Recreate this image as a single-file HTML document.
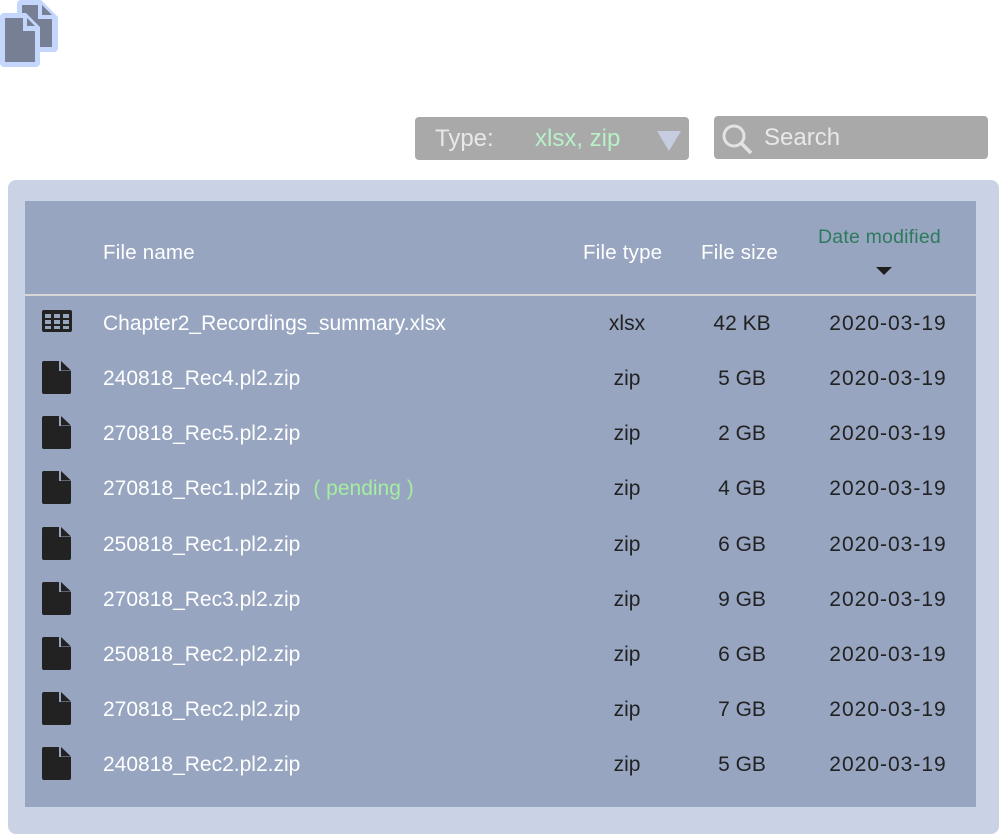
<!DOCTYPE html>
<html><head><meta charset="utf-8"><style>
*{margin:0;padding:0;box-sizing:border-box}
body{width:1005px;height:835px;background:#fff;position:relative;overflow:hidden;font-family:"Liberation Sans",sans-serif}
.a{position:absolute;white-space:nowrap}
.outer{left:8px;top:180px;width:991px;height:654px;background:#cad3e6;border-radius:8px}
.inner{left:25px;top:201px;width:951px;height:606px;background:#97a5c0}
.hd{color:#fff;font-size:20.5px;letter-spacing:0.2px}
.nm{color:#fff;font-size:21px;left:103px}
.c{color:#222;font-size:21px;text-align:center}
.dt{letter-spacing:1px}
</style></head><body>
<svg class="a" style="left:0;top:0" width="60" height="70" viewBox="0 0 60 70">
<path d="M21 0h20l17 17v31a4 4 0 0 1-4 4H21a4 4 0 0 1-4-4V4a4 4 0 0 1 4-4z" fill="#c4d6fb"/>
<path d="M22 5h16v14h14v28H22z" fill="#767f93"/><path d="M42 5l10 10H42z" fill="#767f93"/>
<path d="M4 13h22l14 14v36a4 4 0 0 1-4 4H4a4 4 0 0 1-4-4V17a4 4 0 0 1 4-4z" fill="#c4d6fb"/>
<path d="M5 18h18v13h12v31H5z" fill="#767f93"/><path d="M27 18l8 8h-8z" fill="#767f93"/>
</svg>
<div class="a" style="left:415px;top:117px;width:274px;height:43px;background:#a9a9a9;border-radius:4px"></div>
<div class="a" style="left:435px;top:125px;font-size:24px;color:#e8e8e8">Type:</div>
<div class="a" style="left:535px;top:125px;font-size:24px;color:#b8f0c8">xlsx, zip</div>
<svg class="a" style="left:657px;top:131px" width="24" height="20"><path d="M0 0h24L12 20z" fill="#c6cde0"/></svg>
<div class="a" style="left:714px;top:116px;width:274px;height:43px;background:#a9a9a9;border-radius:4px"></div>
<svg class="a" style="left:720px;top:121px" width="36" height="36"><circle cx="14" cy="15" r="10" fill="none" stroke="#e3e3e3" stroke-width="3"/><path d="M21 22l10 10" stroke="#e3e3e3" stroke-width="3.5"/></svg>
<div class="a" style="left:764px;top:124px;font-size:24px;color:#e8e8e8">Search</div>
<div class="a outer"></div>
<div class="a inner"></div>
<div class="a hd" style="left:103px;top:241px">File name</div>
<div class="a hd" style="left:583px;top:241px">File type</div>
<div class="a hd" style="left:701px;top:241px">File size</div>
<div class="a" style="left:818px;top:226px;font-size:19.5px;color:#2e7a5c;letter-spacing:0.2px">Date modified</div>
<svg class="a" style="left:876px;top:267px" width="16" height="8"><path d="M0 0h16L8 8z" fill="#1e1e1e"/></svg>
<div class="a" style="left:25px;top:294px;width:951px;height:2px;background:#d6d6d6"></div>
<svg class="a" style="left:41px;top:309px" width="32" height="24"><rect x="1" y="1" width="30" height="22" rx="2" fill="#222"/>
<g fill="#97a5c0"><rect x="4" y="5" width="6" height="4"/><rect x="13" y="5" width="6" height="4"/><rect x="22" y="5" width="6" height="4"/><rect x="4" y="11" width="6" height="4"/><rect x="13" y="11" width="6" height="4"/><rect x="22" y="11" width="6" height="4"/><rect x="4" y="17" width="6" height="3"/><rect x="13" y="17" width="6" height="3"/><rect x="22" y="17" width="6" height="3"/></g></svg>
<div class="a nm" style="top:312px">Chapter2_Recordings_summary.xlsx</div>
<div class="a c" style="left:587px;width:80px;top:312px">xlsx</div>
<div class="a c" style="left:700px;width:84px;top:312px">42 KB</div>
<div class="a c dt" style="left:818px;width:140px;top:312px">2020-03-19</div>
<div id="rows"></div>
<script>
var d=[["240818_Rec4.pl2.zip","5 GB"],["270818_Rec5.pl2.zip","2 GB"],["270818_Rec1.pl2.zip","4 GB",1],["250818_Rec1.pl2.zip","6 GB"],["270818_Rec3.pl2.zip","9 GB"],["250818_Rec2.pl2.zip","6 GB"],["270818_Rec2.pl2.zip","7 GB"],["240818_Rec2.pl2.zip","5 GB"]];
var h="";d.forEach(function(r,i){var y=Math.round(367+i*55.2);
h+='<svg class="a" style="left:42px;top:'+(y-6)+'px" width="30" height="34"><path d="M2 0h15v10h12v21a2 2 0 0 1-2 2H2a2 2 0 0 1-2-2V2a2 2 0 0 1 2-2z" fill="#222"/><path d="M19 0L29 9.5H19z" fill="#222"/></svg>';
h+='<div class="a nm" style="top:'+y+'px">'+r[0]+(r[2]?'<span style="color:#a4ee9f;margin-left:13px">( pending )</span>':'')+'</div>';
h+='<div class="a c" style="left:587px;width:80px;top:'+y+'px">zip</div>';
h+='<div class="a c" style="left:700px;width:84px;top:'+y+'px">'+r[1]+'</div>';
h+='<div class="a c dt" style="left:818px;width:140px;top:'+y+'px">2020-03-19</div>';});
document.getElementById("rows").innerHTML=h;
</script>
</body></html>
